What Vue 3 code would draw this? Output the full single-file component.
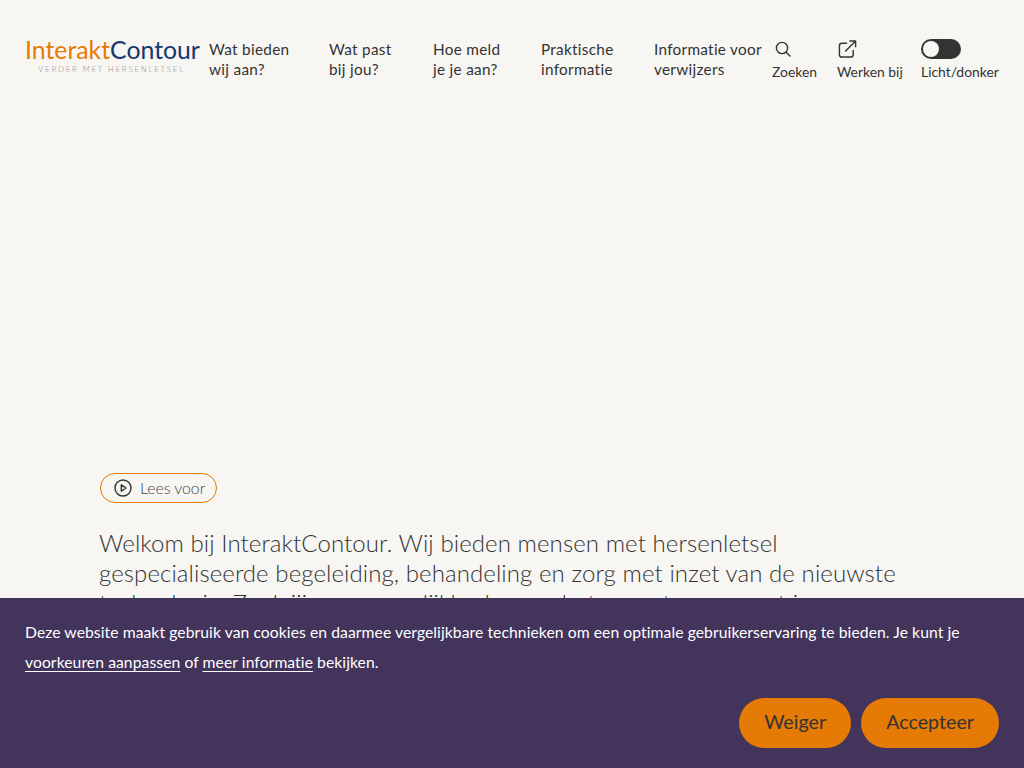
<script setup>
const navItems = [
  ['Wat bieden', 'wij aan?'],
  ['Wat past', 'bij jou?'],
  ['Hoe meld', 'je je aan?'],
  ['Praktische', 'informatie'],
  ['Informatie voor', 'verwijzers'],
]
</script>

<template>
  <div class="page">
    <header class="header">
      <a class="logo">
        <span class="logo-name"><span class="orange">Interakt</span><span class="blue">Contour</span></span>
        <span class="logo-sub">VERDER MET HERSENLETSEL</span>
      </a>
      <nav class="nav">
        <a v-for="item in navItems" :key="item[0]" class="nav-item">{{ item[0] }}<br>{{ item[1] }}</a>
      </nav>
      <div class="tools">
        <a class="tool tool-search">
          <svg width="18" height="18" viewBox="0 0 18 18" fill="none" stroke="#333" stroke-width="1.4" stroke-linecap="round">
            <circle cx="8" cy="8" r="5.6" />
            <path d="M12.2 12.2 16 16" />
          </svg>
          <span>Zoeken</span>
        </a>
        <a class="tool tool-work">
          <svg width="19" height="19" viewBox="0 0 20 20" fill="none" stroke="#333" stroke-width="1.5" stroke-linecap="round" stroke-linejoin="round">
            <path d="M9 4H4a2.5 2.5 0 0 0-2.5 2.5V16A2.5 2.5 0 0 0 4 18.500h9.500A2.500 2.500 0 0 0 16 16v-4.500" />
            <path d="M12.500 1.500h6v6M18.500 1.500 8 12" />
          </svg>
          <span>Werken bij</span>
        </a>
        <a class="tool tool-toggle">
          <span class="toggle"><span class="knob"></span></span>
          <span>Licht/donker</span>
        </a>
      </div>
    </header>

    <main class="main">
      <button type="button" class="read-btn">
        <svg width="18" height="18" viewBox="0 0 18 18" fill="none" stroke="#333" stroke-width="1.400" stroke-linejoin="round">
          <circle cx="9" cy="9" r="8" />
          <path d="M7.300 5.800 12 9l-4.700 3.200z" />
        </svg>
        <span class="read-label">Lees voor</span>
      </button>
      <p class="intro">
        Welkom bij InteraktContour. Wij bieden mensen met hersenletsel gespecialiseerde begeleiding, behandeling en zorg met inzet van de nieuwste technologie. Zoek jij naar mogelijkheden om beter om te gaan met je hersenletsel?
      </p>
    </main>

    <section class="cookie">
      <p class="cookie-text">
        Deze website maakt gebruik van cookies en daarmee vergelijkbare technieken om een optimale gebruikerservaring te bieden. Je kunt je<br>
        <a>voorkeuren aanpassen</a> of <a>meer informatie</a> bekijken.
      </p>
      <div class="cookie-actions">
        <button type="button" class="cookie-btn">Weiger</button>
        <button type="button" class="cookie-btn">Accepteer</button>
      </div>
    </section>
  </div>
</template>

<style>
html, body {
  margin: 0;
  background: #f7f6f2;
}
</style>

<style scoped>
.page {
  position: relative;
  height: 768px;
  overflow: hidden;
  background: #f7f6f2;
  color: #333;
  font-family: Lato, "Noto Sans", sans-serif;
}

.header {
  display: flex;
  align-items: flex-start;
  padding: 39px 25px 0;
}

.logo {
  display: flex;
  flex-direction: column;
  align-items: center;
  width: 175px;
  margin-top: -2px;
  flex: none;
}

.logo-name {
  font-size: 24.800px;
  line-height: 26px;
  white-space: nowrap;
}

.orange {
  color: #e57a05;
}

.blue {
  color: #16366f;
}

.logo-sub {
  margin: 2px 0 0 -2px;
  font-size: 8px;
  line-height: 9px;
  letter-spacing: 1.700px;
  font-weight: 300;
  color: #8f8f8d;
  white-space: nowrap;
}

.nav {
  display: grid;
  grid-template-columns: 120px 104px 108px 113px 108px;
  margin-left: 9px;
  flex: none;
}

.nav-item {
  font-size: 15.300px;
  line-height: 20px;
  letter-spacing: .3px;
  white-space: nowrap;
}

.tools {
  display: grid;
  grid-template-columns: 65px 84px auto;
  margin-left: 10px;
}

.tool {
  display: flex;
  flex-direction: column;
  align-items: flex-start;
  font-size: 13.900px;
  line-height: 18px;
  white-space: nowrap;
}

.tool svg,
.toggle {
  height: 20px;
  margin-bottom: 4px;
  flex: none;
}

.tool-search svg {
  margin-left: 2px;
}

.tool-work svg {
  margin-left: 1px;
}

.toggle {
  display: flex;
  align-items: center;
  width: 40px;
  padding: 2px;
  box-sizing: border-box;
  border-radius: 10px;
  background: #333;
}

.knob {
  width: 16px;
  height: 16px;
  border-radius: 50%;
  background: #f7f6f2;
}

.main {
  padding: 392px 0 0 99px;
}

.read-btn {
  display: flex;
  align-items: center;
  gap: 8px;
  height: 30px;
  margin-left: 1px;
  padding: 0 11px 0 13px;
  border: 1px solid #e57a05;
  border-radius: 15px;
  background: none;
  color: #444;
  font: inherit;
  font-size: 15.800px;
  font-weight: 300;
}

.read-label {
  margin-top: -2px;
}

.intro {
  margin: 25px 0 0;
  width: 825px;
  font-size: 24px;
  line-height: 30px;
  font-weight: 300;
  letter-spacing: .09px;
}

.cookie {
  position: absolute;
  left: 0;
  right: 0;
  bottom: 0;
  height: 170px;
  padding: 19px 25px;
  box-sizing: border-box;
  background: #43345c;
  color: #fff;
}

.cookie-text {
  margin: 0;
  font-size: 15.700px;
  line-height: 30px;
  letter-spacing: .07px;
  white-space: nowrap;
}

.cookie-text a {
  text-decoration: underline;
  text-underline-offset: 3px;
}

.cookie-actions {
  display: flex;
  justify-content: flex-end;
  gap: 10px;
  margin-top: 21px;
}

.cookie-btn {
  height: 50px;
  padding: 0 25px 3px;
  border: none;
  border-radius: 25px;
  background: #e57a05;
  color: #333;
  font: inherit;
  font-size: 19.600px;
  letter-spacing: .05px;
}
</style>
